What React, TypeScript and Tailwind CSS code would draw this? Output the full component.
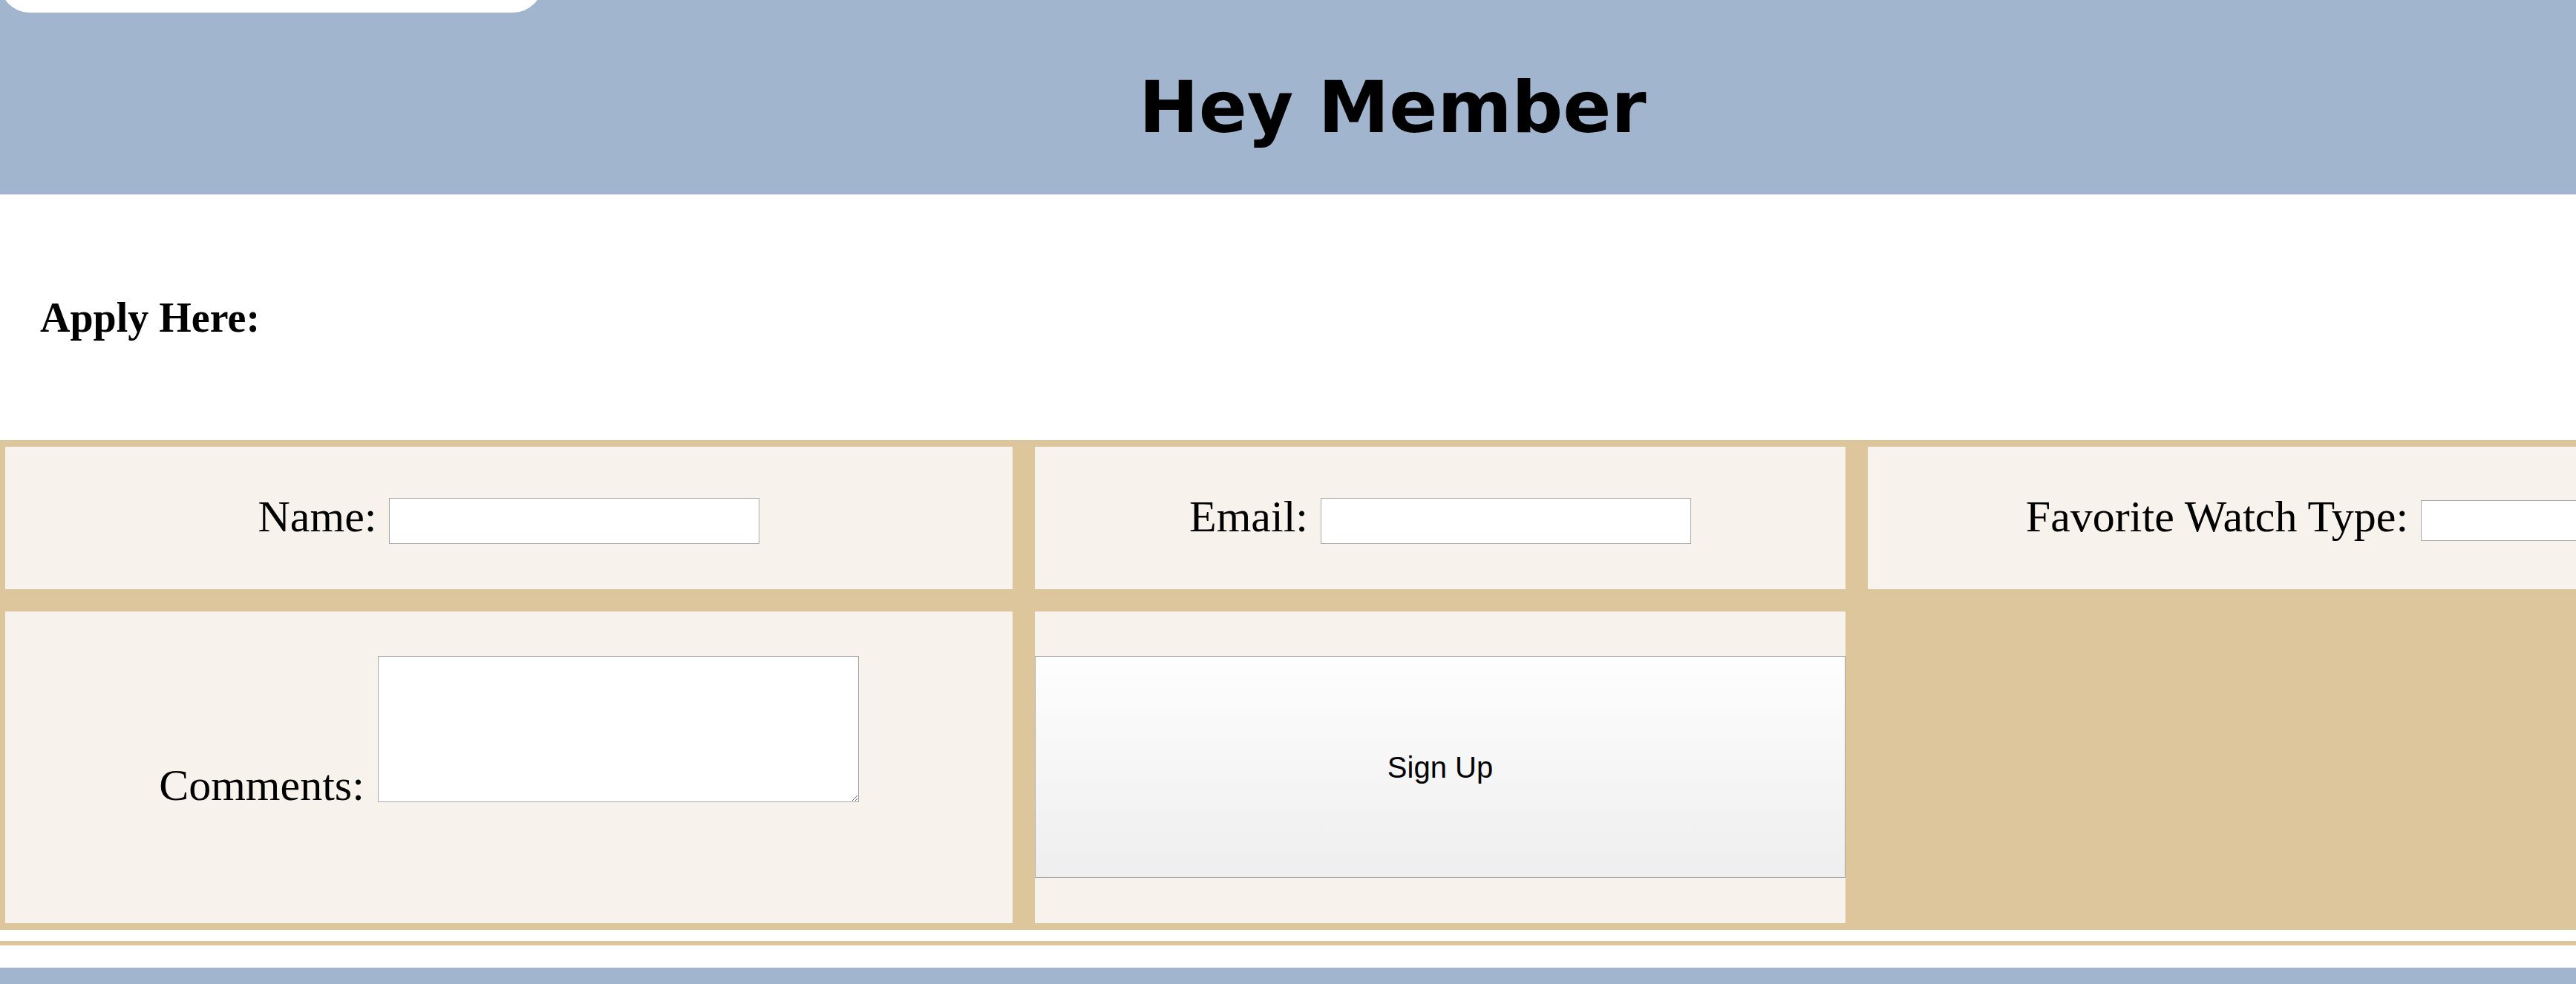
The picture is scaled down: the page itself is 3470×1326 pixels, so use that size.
import React from 'react'

const serif = "font-['Liberation_Serif','Times_New_Roman',serif]"

function Field({ label, inputClass }: { label: string; inputClass: string }) {
  return (
    <div className="bg-[#f7f3ec] pt-[60px]">
      <div className="flex items-start justify-center gap-[17px]">
        <label className={`${serif} text-[60px] leading-[normal] text-black`}>{label}</label>
        <input
          type="text"
          className={`bg-white border border-[#a9a9a9] outline-none ${inputClass}`}
        />
      </div>
    </div>
  )
}

export default function App() {
  return (
    <div className="w-full h-[1326px] overflow-hidden bg-white flex flex-col">
      <header className="h-[262px] shrink-0 bg-[#a1b5ce]">
        <div className="h-[17px] overflow-hidden">
          <div className="w-[731px] h-[80px] -mt-[63px] bg-white rounded-b-[40px]" />
        </div>
        <h1 className="mt-[72px] pl-[282px] text-center font-['DejaVu_Sans',Verdana,sans-serif] font-bold text-[96px] leading-[normal] text-black">
          Hey Member
        </h1>
      </header>

      <section className="pt-[134px] pl-[54px]">
        <h3 className={`${serif} font-bold text-[56px] leading-[normal] text-black`}>Apply Here:</h3>
      </section>

      <div className="mt-[133px] shrink-0 bg-[#ddc69b] pt-[9px] pb-[9px] pl-[7px] grid grid-cols-[1357px_1092px_1457px] grid-rows-[192px_420px] gap-[30px]">
        <Field label="Name:" inputClass="w-[499px] h-[62px] mt-[9px]" />
        <Field label="Email:" inputClass="w-[499px] h-[62px] mt-[9px]" />
        <Field label="Favorite Watch Type:" inputClass="w-[499px] h-[55px] mt-[12px]" />

        <div className="bg-[#f7f3ec] pt-[60px]">
          <div className="flex items-end justify-center gap-[18px]">
            <label className={`${serif} text-[60px] leading-[normal] text-black`}>Comments:</label>
            <textarea className="w-[648px] h-[197px] mb-[12px] bg-white border border-[#a9a9a9] outline-none" />
          </div>
        </div>

        <div className="bg-[#f7f3ec] pt-[60px]">
          <button
            type="button"
            className="w-full h-[299px] border border-[#a9a9a9] bg-linear-to-b from-[#fefefe] to-[#eeeeee] font-['Liberation_Sans',Arial,sans-serif] text-[40px] text-black"
          >
            Sign Up
          </button>
        </div>
      </div>

      <div className="mt-[15px] h-[6px] shrink-0 bg-[#ddc69b]" />
      <footer className="mt-[30px] flex-1 bg-[#a1b5ce]" />
    </div>
  )
}
